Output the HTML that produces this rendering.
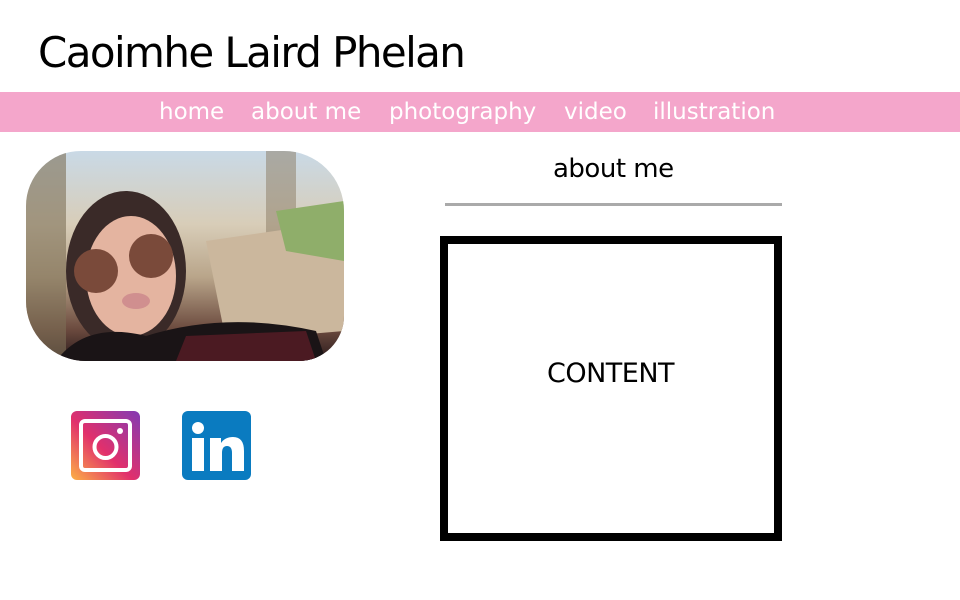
<!DOCTYPE html>
<html><head><meta charset="utf-8"><style>
*{margin:0;padding:0;box-sizing:border-box}
body{width:960px;height:600px;background:#fff;position:relative;overflow:hidden;font-family:"DejaVu Sans","Liberation Sans",sans-serif}
.t{position:absolute;left:38px;top:28px;font-size:42px;letter-spacing:-1.6px;color:#000;white-space:nowrap}
.nav{position:absolute;left:0;top:92px;width:960px;height:40px;background:#f4a6cb}
.nav span{position:absolute;top:7px;color:#fff;font-size:23px;letter-spacing:0;white-space:nowrap}
.photo{position:absolute;left:26px;top:151px;width:318px;height:210px;border-radius:55px 60px 45px 60px;overflow:hidden;
background:linear-gradient(180deg,#c9d9e6 0%,#d8cdb8 35%,#b9a58a 60%,#6b4a3e 85%,#2a1a1c 100%)}
.ab{position:absolute;left:553px;top:154px;font-size:26px;letter-spacing:-0.5px}
.ln{position:absolute;left:445px;top:203px;width:337px;height:3px;background:#aaa}
.box{position:absolute;left:440px;top:236px;width:342px;height:305px;border:8px solid #000}
.c{position:absolute;left:547px;top:358px;font-size:27px;letter-spacing:-0.5px}
</style></head><body>
<div class="t">Caoimhe Laird Phelan</div>
<div class="nav">
<span style="left:159px">home</span>
<span style="left:251px">about me</span>
<span style="left:389px">photography</span>
<span style="left:564px">video</span>
<span style="left:653px">illustration</span>
</div>
<div class="photo">
<svg width="318" height="210" viewBox="0 0 318 210">
<rect x="0" y="0" width="40" height="210" fill="#7d6f57" opacity=".6"/>
<rect x="240" y="0" width="30" height="150" fill="#8a7a62" opacity=".5"/>
<path d="M180 90 L318 70 L318 180 L200 190Z" fill="#cbb79d"/>
<path d="M250 60 L318 50 L318 110 L260 100Z" fill="#8fae6a"/>
<ellipse cx="100" cy="120" rx="60" ry="80" fill="#3a2a28"/>
<ellipse cx="105" cy="125" rx="45" ry="60" fill="#e4b4a0"/>
<ellipse cx="70" cy="120" rx="22" ry="22" fill="#7a4a3a"/>
<ellipse cx="125" cy="105" rx="22" ry="22" fill="#7a4a3a"/>
<ellipse cx="110" cy="150" rx="14" ry="8" fill="#d08f8f"/>
<path d="M30 210 Q60 170 120 185 Q200 160 290 180 L300 210Z" fill="#1a1416"/>
<path d="M150 210 L160 185 L280 180 L290 210Z" fill="#4b1a22"/>
</svg>
</div>
<svg style="position:absolute;left:71px;top:411px" width="69" height="69" viewBox="0 0 69 69">
<defs><linearGradient id="ig" x1="0" y1="1" x2="1" y2="0"><stop offset="0" stop-color="#fcb045"/><stop offset=".45" stop-color="#e1306c"/><stop offset="1" stop-color="#833ab4"/></linearGradient></defs>
<rect width="69" height="69" rx="6" fill="url(#ig)"/>
<rect x="10" y="10" width="49" height="49" rx="4" fill="none" stroke="#fff" stroke-width="4"/>
<circle cx="34.5" cy="36" r="11" fill="none" stroke="#fff" stroke-width="4"/>
<circle cx="49" cy="20" r="3" fill="#fff"/>
</svg>
<svg style="position:absolute;left:182px;top:411px" width="69" height="69" viewBox="0 0 69 69">
<rect width="69" height="69" rx="6" fill="#0a7bc0"/>
<circle cx="16" cy="17" r="6" fill="#fff"/>
<rect x="10" y="27" width="12" height="33" fill="#fff"/>
<path d="M28 27 H39 V32 Q43 26 51 26 Q62 26 62 40 V60 H50 V42 Q50 35 45 35 Q40 35 40 42 V60 H28Z" fill="#fff"/>
</svg>
<div class="ab">about me</div>
<div class="ln"></div>
<div class="box"></div>
<div class="c">CONTENT</div>
</body></html>
